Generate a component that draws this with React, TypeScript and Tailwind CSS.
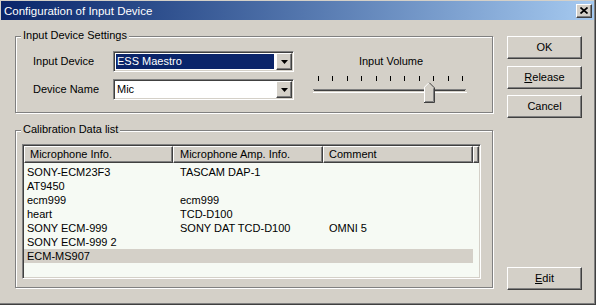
import React from "react";

const rows = [
  ["SONY-ECM23F3", "TASCAM DAP-1", ""],
  ["AT9450", "", ""],
  ["ecm999", "ecm999", ""],
  ["heart", "TCD-D100", ""],
  ["SONY ECM-999", "SONY DAT TCD-D100", "OMNI 5"],
  ["SONY ECM-999 2", "", ""],
  ["ECM-MS907", "", ""],
];

const raised =
  "bg-[#d4d0c8] border border-t-white border-l-white border-b-[#404040] border-r-[#404040] shadow-[inset_-1px_-1px_0_#808080]";

const GroupBox = ({
  label,
  className,
  children,
}: {
  label: string;
  className: string;
  children: React.ReactNode;
}) => (
  <div
    className={`relative border border-[#808080] shadow-[1px_1px_0_#fff,inset_1px_1px_0_#fff] ${className}`}
  >
    <span className="absolute left-[5px] -top-[8px] px-[2px] bg-[#d4d0c8] leading-[13px]">
      {label}
    </span>
    {children}
  </div>
);

const Button = ({ children, className = "" }: { children: React.ReactNode; className?: string }) => (
  <button
    className={`w-[75px] h-[23px] flex items-center justify-center leading-[13px] ${raised} ${className}`}
  >
    {children}
  </button>
);

const Combo = ({ value, selected }: { value: string; selected?: boolean }) => (
  <div className="w-[181px] h-[21px] flex p-px bg-white border border-t-[#808080] border-l-[#808080] border-b-white border-r-white shadow-[inset_1px_1px_0_#404040,inset_-1px_-1px_0_#d4d0c8]">
    <div className="flex-1 p-px flex">
      <span
        className={`flex-1 flex items-center pl-px mr-px leading-[13px] ${
          selected ? "bg-[#0a246a] text-white" : ""
        }`}
      >
        {value}
      </span>
    </div>
    <div className={`w-[16px] h-full flex items-center justify-center ${raised}`}>
      <svg width="7" height="4" viewBox="0 0 7 4">
        <path d="M0 0h7L3.5 4z" fill="#000" />
      </svg>
    </div>
  </div>
);

const Trackbar = () => (
  <svg width="154" height="27" viewBox="0 0 154 27" shapeRendering="crispEdges">
    {Array.from({ length: 11 }).map((_, i) => {
      const x = Math.round(5 + i * 14.4) + 0.5;
      return <line key={i} x1={x} y1={0} x2={x} y2={5} stroke="#000" />;
    })}
    <line x1={0} y1={13.5} x2={153} y2={13.5} stroke="#808080" />
    <line x1={1} y1={14.5} x2={152} y2={14.5} stroke="#404040" />
    <line x1={0} y1={16.5} x2={154} y2={16.5} stroke="#fff" />
    <path d="M111 26.5V11L116 6L121 11V26.5Z" fill="#d4d0c8" shapeRendering="auto" />
    <polyline points="111.5,26 111.5,11.2 116,6.7" fill="none" stroke="#fff" shapeRendering="auto" />
    <polyline points="116.3,6.7 121.5,11.9 121.5,26.5 111,26.5" fill="none" stroke="#404040" shapeRendering="auto" />
    <polyline points="120.5,12.3 120.5,25.5 112,25.5" fill="none" stroke="#808080" shapeRendering="auto" />
  </svg>
);

export default function App() {
  return (
    <div className="w-[596px] h-[305px] bg-[#d4d0c8] flex flex-col border-r border-b border-[#404040] shadow-[inset_-1px_-1px_0_#808080] font-['Liberation_Sans',Arial,sans-serif] text-[11px] text-black overflow-hidden">
      <div className="mt-px ml-px mr-px h-[19px] flex items-center justify-between pl-[3px] pr-[2px] bg-gradient-to-r from-[#0a246a] to-[#a6caf0]">
        <span className="text-white text-[11.5px] leading-[13px] pt-px">Configuration of Input Device</span>
        <div className={`w-[16px] h-[14px] flex items-center justify-center ${raised}`}>
          <svg width="8" height="7" viewBox="0 0 8 7">
            <path d="M0.5 0.5L7.5 6.5M7.5 0.5L0.5 6.5" stroke="#000" strokeWidth="1.7" />
          </svg>
        </div>
      </div>

      <div className="flex pl-[15px] pt-[16px]">
        <div className="flex flex-col w-[478px]">
          <GroupBox label="Input Device Settings" className="h-[77px]">
            <div className="flex pl-[17px]">
              <div className="flex flex-col gap-[7px] pt-[14px]">
                <div className="flex items-center">
                  <span className="w-[80px] leading-[13px]">Input Device</span>
                  <Combo value="ESS Maestro" selected />
                </div>
                <div className="flex items-center">
                  <span className="w-[80px] leading-[13px]">Device Name</span>
                  <Combo value="Mic" />
                </div>
              </div>
              <div className="ml-[19px] pt-[18px] flex flex-col">
                <span className="text-center leading-[13px] pl-[2px]">Input Volume</span>
                <div className="mt-[8px] flex">
                  <Trackbar />
                </div>
              </div>
            </div>
          </GroupBox>

          <GroupBox label="Calibration Data list" className="mt-[17px] h-[158px]">
            <div className="pl-[6px] pt-[13px]">
              <div className="w-[459px] h-[135px] bg-[#f6faf4] border border-t-[#808080] border-l-[#808080] border-b-white border-r-white shadow-[inset_1px_1px_0_#404040,inset_-1px_-1px_0_#d4d0c8] p-px">
                <div className="flex h-[17px] leading-[13px]">
                  <div className={`w-[149px] pl-[5px] flex items-center ${raised}`}>Microphone Info.</div>
                  <div className={`w-[150px] pl-[6px] flex items-center ${raised}`}>Microphone Amp. Info.</div>
                  <div className={`w-[150px] pl-[5px] flex items-center ${raised}`}>Comment</div>
                  <div className={`flex-1 ${raised}`} />
                </div>
                <div className="mt-[2px] flex flex-col">
                  {rows.map((r, i) => (
                    <div
                      key={i}
                      className={`flex w-[449px] h-[14px] items-center leading-[13px] ${
                        i === rows.length - 1 ? "bg-[#d4d0c8]" : ""
                      }`}
                    >
                      <span className="w-[149px] pl-[3px]">{r[0]}</span>
                      <span className="w-[150px] pl-[7px]">{r[1]}</span>
                      <span className="w-[150px] pl-[6px]">{r[2]}</span>
                    </div>
                  ))}
                </div>
              </div>
            </div>
          </GroupBox>
        </div>

        <div className="ml-[14px] w-[75px] h-[254px] flex flex-col">
          <Button>OK</Button>
          <Button className="mt-[7px]">
            <span>
              <u className="underline-offset-1">R</u>elease
            </span>
          </Button>
          <Button className="mt-[6px]">Cancel</Button>
          <Button className="mt-auto">
            <span>
              <u className="underline-offset-1">E</u>dit
            </span>
          </Button>
        </div>
      </div>
    </div>
  );
}
